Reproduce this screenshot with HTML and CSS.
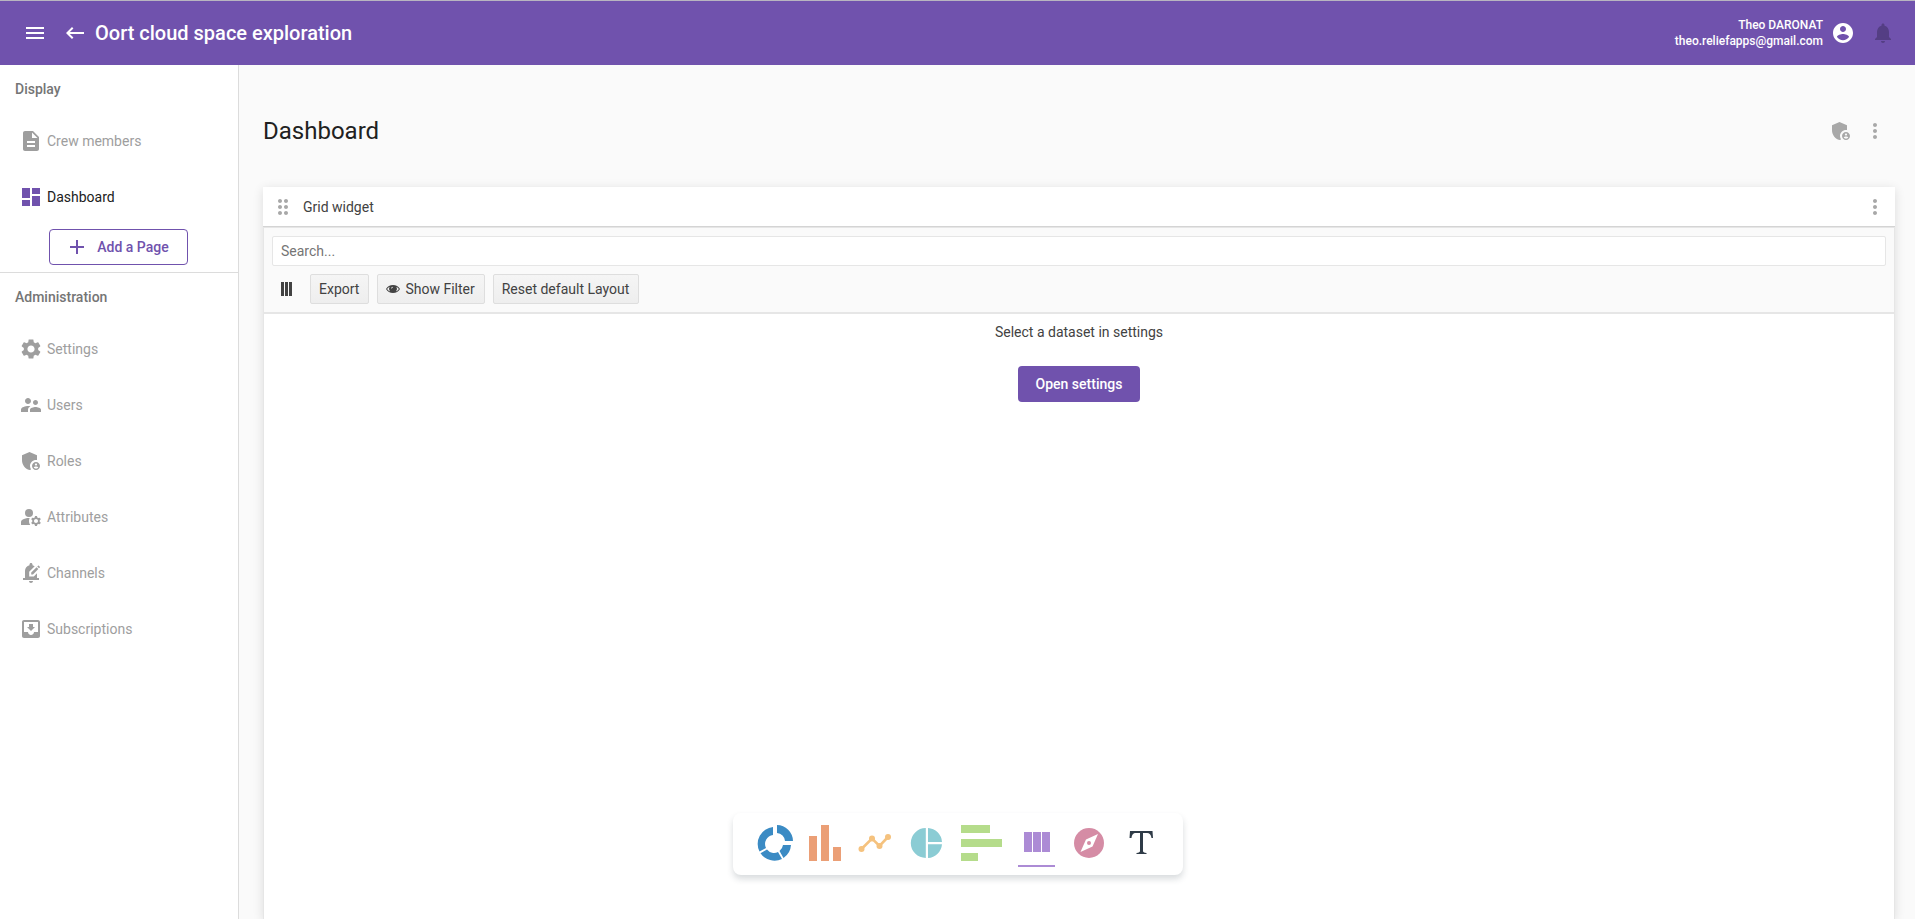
FILE: index.html
```html
<!DOCTYPE html>
<html lang="en">
<head>
<meta charset="utf-8">
<title>Oort cloud space exploration</title>
<link rel="stylesheet" href="styles.css">
</head>
<body>
<svg class="defs" aria-hidden="true">
  <symbol id="shield" viewBox="0 0 24 24"><path d="M17 11c.34 0 .67.04 1 .09V6.27L10.5 3 3 6.27v4.91c0 4.54 3.2 8.79 7.5 9.82.55-.13 1.08-.32 1.6-.55-.69-.98-1.1-2.17-1.1-3.45 0-3.31 2.69-6 6-6z"/><path d="M17 13c-2.21 0-4 1.79-4 4s1.79 4 4 4 4-1.79 4-4-1.79-4-4-4zm0 1.38c.62 0 1.12.51 1.12 1.12s-.51 1.12-1.12 1.12-1.12-.51-1.12-1.12.5-1.12 1.12-1.12zm0 5.37c-.93 0-1.74-.46-2.24-1.17.05-.72 1.51-1.08 2.24-1.08s2.19.36 2.24 1.08c-.5.71-1.31 1.17-2.24 1.17z"/></symbol>
  <symbol id="more" viewBox="0 0 24 24"><path d="M12 8c1.1 0 2-.9 2-2s-.9-2-2-2-2 .9-2 2 .9 2 2 2zm0 2c-1.1 0-2 .9-2 2s.9 2 2 2 2-.9 2-2-.9-2-2-2zm0 6c-1.1 0-2 .9-2 2s.9 2 2 2 2-.9 2-2-.9-2-2-2z"/></symbol>
</svg>
<div class="app">
  <header class="topbar">
    <button class="icon-btn" aria-label="Menu"><svg class="icon" viewBox="0 0 24 24"><path d="M3 18h18v-2H3v2zm0-5h18v-2H3v2zm0-7v2h18V6H3z"/></svg></button>
    <button class="icon-btn back" aria-label="Back"><svg class="icon" viewBox="0 0 24 24"><path d="M21 11H6.83l3.58-3.59L9 6l-6 6 6 6 1.41-1.41L6.83 13H21z"/></svg></button>
    <span class="app-name">Oort cloud space exploration</span>
    <div class="user"><span>Theo DARONAT</span><span>theo.reliefapps@gmail.com</span></div>
    <button class="icon-btn" aria-label="Account"><svg class="icon" viewBox="0 0 24 24"><path d="M12 2C6.48 2 2 6.48 2 12s4.48 10 10 10 10-4.48 10-10S17.52 2 12 2zm0 3c1.66 0 3 1.34 3 3s-1.34 3-3 3-3-1.34-3-3 1.34-3 3-3zm0 14.2c-2.5 0-4.71-1.28-6-3.22.03-1.99 4-3.08 6-3.08 1.99 0 5.97 1.09 6 3.08-1.29 1.94-3.5 3.22-6 3.22z"/></svg></button>
    <button class="icon-btn bell" aria-label="Notifications" disabled><svg class="icon" viewBox="0 0 24 24"><path d="M12 22c1.1 0 2-.9 2-2h-4c0 1.1.89 2 2 2zm6-6v-5c0-3.07-1.64-5.64-4.5-6.32V4c0-.83-.67-1.5-1.5-1.5s-1.5.67-1.5 1.5v.68C7.63 5.36 6 7.92 6 11v5l-2 2v1h16v-1l-2-2z"/></svg></button>
  </header>
  <div class="body">
    <nav class="sidebar">
      <h2 class="nav-title">Display</h2>
      <a class="nav-item" href="#"><svg class="icon" viewBox="0 0 24 24"><path d="M14 2H6c-1.1 0-1.99.9-1.99 2L4 20c0 1.1.89 2 1.99 2H18c1.1 0 2-.9 2-2V8l-6-6zm2 16H8v-2h8v2zm0-4H8v-2h8v2zm-3-5V3.5L18.5 9H13z"/></svg><span>Crew members</span></a>
      <a class="nav-item active" href="#"><svg class="icon" viewBox="0 0 24 24"><path d="M3 13h8V3H3v10zm0 8h8v-6H3v6zm10 0h8V11h-8v10zm0-18v6h8V3h-8z"/></svg><span>Dashboard</span></a>
      <div class="add-row"><button class="add-page"><svg class="icon" viewBox="0 0 24 24"><path d="M19 13h-6v6h-2v-6H5v-2h6V5h2v6h6v2z"/></svg>Add a Page</button></div>
      <h2 class="nav-title">Administration</h2>
      <a class="nav-item" href="#"><svg class="icon" viewBox="0 0 24 24"><path d="M19.14 12.94c.04-.3.06-.61.06-.94 0-.32-.02-.64-.07-.94l2.03-1.58c.18-.14.23-.41.12-.61l-1.92-3.32c-.12-.22-.37-.29-.59-.22l-2.39.96c-.5-.38-1.03-.7-1.62-.94l-.36-2.54c-.04-.24-.24-.41-.48-.41h-3.84c-.24 0-.43.17-.47.41l-.36 2.54c-.59.24-1.13.57-1.62.94l-2.39-.96c-.22-.08-.47 0-.59.22L2.74 8.87c-.12.21-.08.47.12.61l2.03 1.58c-.05.3-.09.63-.09.94s.02.64.07.94l-2.03 1.58c-.18.14-.23.41-.12.61l1.92 3.32c.12.22.37.29.59.22l2.39-.96c.5.38 1.03.7 1.62.94l.36 2.54c.05.24.24.41.48.41h3.84c.24 0 .44-.17.47-.41l.36-2.54c.59-.24 1.13-.56 1.62-.94l2.39.96c.22.08.47 0 .59-.22l1.92-3.32c.12-.22.07-.47-.12-.61l-2.01-1.58zM12 15.6c-1.98 0-3.6-1.62-3.6-3.6s1.62-3.6 3.6-3.6 3.6 1.62 3.6 3.6-1.62 3.6-3.6 3.6z"/></svg><span>Settings</span></a>
      <a class="nav-item" href="#"><svg class="icon" viewBox="0 0 24 24"><path d="M16.5 12c1.38 0 2.49-1.12 2.49-2.5S17.88 7 16.5 7C15.12 7 14 8.12 14 9.5s1.12 2.5 2.5 2.5zM9 11c1.66 0 2.99-1.34 2.99-3S10.66 5 9 5C7.34 5 6 6.34 6 8s1.34 3 3 3zm7.5 3c-1.83 0-5.5.92-5.5 2.75V19h11v-2.25c0-1.83-3.67-2.75-5.5-2.75zM9 13c-2.33 0-7 1.17-7 3.5V19h7v-2.25c0-.85.33-2.34 2.37-3.47C10.5 13.1 9.66 13 9 13z"/></svg><span>Users</span></a>
      <a class="nav-item" href="#"><svg class="icon"><use href="#shield"/></svg><span>Roles</span></a>
      <a class="nav-item" href="#"><svg class="icon" viewBox="0 0 24 24"><circle cx="10" cy="8" r="4"/><path d="M10.67 13.02C10.45 13.01 10.23 13 10 13c-2.42 0-4.68.67-6.61 1.82C2.51 15.34 2 16.32 2 17.35V20h9.26C10.47 18.87 10 17.49 10 16c0-1.07.25-2.07.67-2.98zM20.75 16c0-.22-.03-.42-.06-.63l1.14-1.01-1-1.73-1.45.49c-.32-.27-.68-.48-1.08-.63L18 11h-2l-.3 1.49c-.4.15-.76.36-1.08.63l-1.45-.49-1 1.73 1.14 1.01c-.03.21-.06.41-.06.63s.03.42.06.63l-1.14 1.01 1 1.73 1.45-.49c.32.27.68.48 1.08.63L16 21h2l.3-1.49c.4-.15.76-.36 1.08-.63l1.45.49 1-1.73-1.14-1.01c.03-.21.06-.41.06-.63zM17 18c-1.1 0-2-.9-2-2s.9-2 2-2 2 .9 2 2-.9 2-2 2z"/></svg><span>Attributes</span></a>
      <a class="nav-item" href="#"><svg class="icon" viewBox="0 0 24 24"><path d="M17.58 6.25l1.77 1.77-5.37 5.37h-1.77v-1.77l5.37-5.37zM20.85 5.81l-1.06-1.06c-.2-.2-.51-.2-.71 0l-.85.85L20 7.37l.85-.85c.2-.2.2-.52 0-.71zM12 22c1.1 0 2-.9 2-2h-4c0 1.1.9 2 2 2zM18 12.2V17h2v2H4v-2h2v-7c0-2.79 1.91-5.14 4.5-5.8v-.7C10.5 2.67 11.17 2 12 2s1.5.67 1.5 1.5v.7c.82.21 1.57.59 2.21 1.09L10.2 10.8V15.4h4.6L18 12.2z"/></svg><span>Channels</span></a>
      <a class="nav-item" href="#"><svg class="icon" viewBox="0 0 24 24"><path d="M19 3H4.99c-1.11 0-1.98.9-1.98 2L3 19c0 1.1.88 2 1.99 2H19c1.1 0 2-.9 2-2V5c0-1.1-.9-2-2-2zm0 12h-4c0 1.66-1.35 3-3 3s-3-1.34-3-3H4.99V5H19v10zm-3-5h-2V7h-4v3H8l4 4 4-4z"/></svg><span>Subscriptions</span></a>
    </nav>
    <main class="main">
      <div class="page-head">
        <h1 class="page-title">Dashboard</h1>
        <button class="icon-btn" aria-label="Access"><svg class="icon"><use href="#shield"/></svg></button>
        <button class="icon-btn" aria-label="More"><svg class="icon"><use href="#more"/></svg></button>
      </div>
      <section class="widget">
        <div class="widget-head">
          <svg class="icon" viewBox="0 0 24 24"><path d="M11 18c0 1.1-.9 2-2 2s-2-.9-2-2 .9-2 2-2 2 .9 2 2zm-2-8c-1.1 0-2 .9-2 2s.9 2 2 2 2-.9 2-2-.9-2-2-2zm0-6c-1.1 0-2 .9-2 2s.9 2 2 2 2-.9 2-2-.9-2-2-2zm6 4c1.1 0 2-.9 2-2s-.9-2-2-2-2 .9-2 2 .9 2 2 2zm0 2c-1.1 0-2 .9-2 2s.9 2 2 2 2-.9 2-2-.9-2-2-2zm0 6c-1.1 0-2 .9-2 2s.9 2 2 2 2-.9 2-2-.9-2-2-2z"/></svg>
          <span class="widget-title">Grid widget</span>
          <button class="icon-btn" aria-label="Widget menu"><svg class="icon"><use href="#more"/></svg></button>
        </div>
        <div class="grid">
          <div class="toolbar">
            <input class="search" type="text" placeholder="Search..." aria-label="Search">
            <div class="tools">
              <button class="columns" aria-label="Columns"><svg width="12" height="14" viewBox="0 0 12 14"><path d="M0 0h3v14H0zM4 0h3v14H4zM8 0h3v14H8z"/></svg></button>
              <button class="tool">Export</button>
              <button class="tool"><svg width="14" height="10" viewBox="0 0 14 10"><path fill-rule="evenodd" d="M7 1C4 1 1.500 2.500 0 5c1.500 2.500 4 4 7 4s5.500-1.500 7-4C12.500 2.500 10 1 7 1zM3.600 2.800a4 4 0 0 0 .4 4.700C2.800 7 1.900 6.200 1.100 5c.7-1 1.500-1.700 2.500-2.200zm6.800 0c1 .5 1.800 1.200 2.500 2.200-.8 1.200-1.700 2-2.900 2.500a4 4 0 0 0 .4-4.700zM5.200 4.500c0-1 .7-1.700 1.700-1.700v.8c-.6 0-.9.4-.9.900z"/></svg>Show Filter</button>
              <button class="tool">Reset default Layout</button>
            </div>
          </div>
          <div class="empty">
            <p class="empty-text">Select a dataset in settings</p>
            <button class="primary">Open settings</button>
          </div>
        </div>
      </section>
    </main>
  </div>
  <div class="dock">
    <button aria-label="Donut chart"><svg width="36" height="36" viewBox="0 0 36 36" fill="#3b8bc4"><path d="M16 2v8a9 9 0 0 0-7 13l-6.500 3.600A17 17 0 0 1 16 2zM20 0a16.500 16.500 0 0 1 16 16h-8a8.500 8.500 0 0 0-8-8zM26 20h8a17 17 0 0 1-7.500 13l-4-7a9 9 0 0 0 3.500-6zM3.500 28.200L10 24.500a9 9 0 0 0 11 2.500l4 7a17 17 0 0 1-21.500-5.800z"/></svg></button>
    <button aria-label="Column chart"><svg width="32" height="36" viewBox="0 0 32 36" fill="#eb9f76"><path d="M0 11h8v25H0zM12 0h8v36h-8zM24 22h8v14h-8z"/></svg></button>
    <button aria-label="Line chart"><svg width="36" height="36" viewBox="0 0 36 36" fill="#f5c27e"><path d="M4.500 24L15 13.500l7.500 7.500L31 12" fill="none" stroke="#f5c27e" stroke-width="2.600"/><circle cx="4.500" cy="24" r="3"/><circle cx="15" cy="13.500" r="3"/><circle cx="22.500" cy="21" r="3"/><circle cx="31" cy="12" r="3"/></svg></button>
    <button aria-label="Pie chart"><svg width="36" height="36" viewBox="0 0 36 36" fill="#8bccd4"><path d="M16.800 3v30a15 15 0 0 1 0-30zM19 3a15 15 0 0 1 14 14H19zM19 19.200h14A15 15 0 0 1 19 33z"/></svg></button>
    <button aria-label="Bar chart"><svg width="41" height="36" viewBox="0 0 41 36" fill="#b5dc8b"><path d="M0 0h29v8H0zM0 14h41v8H0zM0 28h17v8H0z"/></svg></button>
    <button class="selected" aria-label="Grid"><svg width="37" height="36" viewBox="0 0 37 36" fill="#ac8bd5"><path d="M6 7h8v20H6zM15 7h8v20h-8zM24 7h8v20h-8z"/></svg></button>
    <button aria-label="Map"><svg width="36" height="36" viewBox="0 0 36 36"><circle cx="18" cy="18" r="15" fill="#d58ca5"/><path d="M27 9l-5.500 12.500L9.500 27 15 14.500z" fill="#fff"/><circle cx="18" cy="18" r="2" fill="#d58ca5"/></svg></button>
    <button aria-label="Text"><svg width="36" height="36" viewBox="0 0 36 36" fill="#2f3b47"><path d="M7 6h22.500l.5 7h-1.500C28 9.500 26.500 8 24 8h-4v18c0 1.300 1 1.700 3.500 2v1h-10v-1c2.500-.3 3.500-.7 3.500-2V8h-4c-3 0-4 1.500-4.500 5H6.500z"/></svg></button>
  </div>
</div>
</body>
</html>
```
FILE: styles.css
```css
* { box-sizing: border-box; }
body { margin: 0; font: 14px/20px Roboto, "Liberation Sans", sans-serif; color: #424242; background: #fafafa; }
h1, h2, p { margin: 0; }
button { font: inherit; color: inherit; background: none; border: 0; padding: 0; cursor: pointer; }
.defs { display: none; }
.icon { width: 24px; height: 24px; fill: currentColor; flex: none; display: block; }
.icon-btn { flex: none; }

.app { display: flex; flex-direction: column; height: 100vh; overflow: hidden; }
.topbar { display: flex; align-items: center; height: 65px; padding: 0 20px 0 23px; background: #7052ad; border-top: 1px solid #b8b5c0; color: #fff; flex: none; }
.back { margin-left: 16px; }
.app-name { margin-left: 8px; font-size: 20px; font-weight: 500; line-height: 24px; }
.user { display: flex; flex-direction: column; margin-left: auto; margin-right: 8px; text-align: right; font-size: 12px; font-weight: 500; line-height: 16px; }
.bell { margin-left: 16px; color: #543e84; }

.body { display: flex; flex: 1; min-height: 0; }
.sidebar { width: 239px; flex: none; background: #fff; border-right: 1px solid #dcdcdc; }
.nav-title { padding: 0 15px; font-size: 14px; font-weight: 500; line-height: 48px; color: #757575; }
.nav-item { display: flex; align-items: center; gap: 4px; height: 56px; padding-left: 19px; color: #9e9e9e; text-decoration: none; }
.active { color: #212121; }
.active .icon { color: #7052ad; }
.add-row { display: flex; justify-content: center; padding: 4px 2px 7px 0; border-bottom: 1px solid #dcdcdc; }
.add-page { display: flex; align-items: center; justify-content: center; gap: 8px; width: 139px; height: 36px; padding-right: 2px; border: 1px solid #7052ad; border-radius: 4px; color: #7052ad; font-weight: 500; }

.main { display: flex; flex-direction: column; flex: 1; min-width: 0; padding: 42px 20px 0 24px; }
.page-head { display: flex; align-items: center; gap: 10px; height: 48px; padding-right: 8px; margin-bottom: 32px; color: #a8a8a8; }
.page-title { flex: 1; font-size: 24px; font-weight: 400; line-height: 32px; color: #212121; }
.widget { display: flex; flex-direction: column; flex: 1; box-shadow: 0 2px 10px rgba(0, 0, 0, .12); background: #fff; }
.widget-head { display: flex; align-items: center; gap: 8px; height: 40px; padding: 0 8px; border-bottom: 1px solid #d4d4d4; color: #a8a8a8; }
.widget-title { flex: 1; color: #424242; }
.grid { flex: 1; border: 1px solid #e6e6e6; border-bottom: 0; }
.toolbar { padding: 8px; background: #fafafa; border-bottom: 2px solid #e6e6e6; }
.search { display: block; width: 100%; height: 30px; padding: 0 8px; border: 1px solid #e6e6e6; border-radius: 2px; background: #fff; font: inherit; color: inherit; }
.search::placeholder { color: #757575; opacity: 1; }
.tools { display: flex; gap: 8px; margin-top: 8px; }
.columns { display: flex; align-items: center; justify-content: center; width: 30px; height: 30px; fill: #424242; }
.tool { display: flex; align-items: center; gap: 5px; height: 30px; padding: 0 9px 0 8px; border: 1px solid #dedede; border-radius: 2px; background: linear-gradient(#f5f5f5, #eeeeee); fill: #424242; }
.empty { display: flex; flex-direction: column; align-items: center; gap: 24px; padding-top: 8px; }
.primary { min-width: 122px; height: 36px; padding: 0 16px; border-radius: 4px; background: #7052ad; color: #fff; font-weight: 500; }

.dock { position: fixed; bottom: 44px; left: 50%; transform: translateX(-50%); display: flex; gap: 16px; padding: 12px 24px 8px; border-radius: 8px; background: #fff; box-shadow: 0 4px 6px rgba(47, 59, 71, .18); }
.dock button { padding-bottom: 4px; border-bottom: 2px solid transparent; }
.dock svg { display: block; }
.dock .selected { border-color: #ac8bd5; }
```
